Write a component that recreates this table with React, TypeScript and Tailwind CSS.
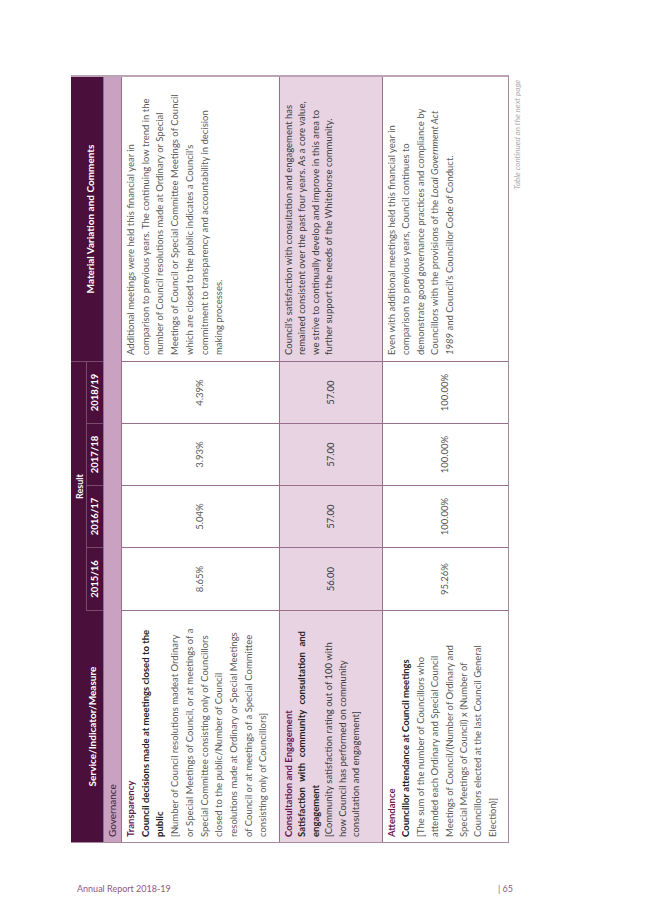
import React from 'react'

type Row = {
  bg: string
  height: string
  leading: string
  tone: string
  heading: string
  title: string[]
  justifyFirst?: boolean
  body: string[]
  values: string[]
  comments: React.ReactNode[]
}

const years = ['2015/16', '2016/17', '2017/18', '2018/19']

const rows: Row[] = [
  {
    bg: 'bg-white',
    height: 'h-[158px]',
    leading: 'leading-[14.7px]',
    tone: 'text-[#5a5a5a]',
    heading: 'Transparency',
    title: ['Council decisions made at meetings closed to the', 'public'],
    body: [
      '[Number of Council resolutions madeat Ordinary',
      'or Special Meetings of Council, or at meetings of a',
      'Special Committee consisting only of Councillors',
      'closed to the public/Number of Council',
      'resolutions made at Ordinary or Special Meetings',
      'of Council or at meetings of a Special Committee',
      'consisting only of Councillors]',
    ],
    values: ['8.65%', '5.04%', '3.93%', '4.39%'],
    comments: [
      'Additional meetings were held this financial year in',
      'comparison to previous years. The continuing low trend in the',
      'number of Council resolutions made at Ordinary or Special',
      'Meetings of Council or Special Committee Meetings of Council',
      'which are closed to the public indicates a Council’s',
      'commitment to transparency and accountability in decision',
      'making processes.',
    ],
  },
  {
    bg: 'bg-[#e7d3e1]',
    height: 'h-[103px]',
    leading: 'leading-[13.4px]',
    tone: 'text-[#3a3a3a]',
    heading: 'Consultation and Engagement',
    title: ['Satisfaction with community consultation and', 'engagement'],
    justifyFirst: true,
    body: [
      '[Community satisfaction rating out of 100 with',
      'how Council has performed on community',
      'consultation and engagement]',
    ],
    values: ['56.00', '57.00', '57.00', '57.00'],
    comments: [
      'Council’s satisfaction with consultation and engagement has',
      'remained consistent over the past four years.  As a core value,',
      'we strive to continually develop and improve in this area to',
      'further support the needs of the Whitehorse community.',
    ],
  },
  {
    bg: 'bg-white',
    height: 'h-[126px]',
    leading: 'leading-[14.4px]',
    tone: 'text-[#5a5a5a]',
    heading: 'Attendance',
    title: ['Councillor attendance at Council meetings'],
    body: [
      '[The sum of the number of Councillors who',
      'attended each Ordinary and Special Council',
      'Meetings of Council/(Number of Ordinary and',
      'Special Meetings of Council) x (Number of',
      'Councillors elected at the last Council General',
      'Election)]',
    ],
    values: ['95.26%', '100.00%', '100.00%', '100.00%'],
    comments: [
      'Even with additional meetings held this financial year in',
      'comparison to previous years, Council continues to',
      'demonstrate good governance practices and compliance by',
      <>
        Councillors with the provisions of the <i>Local Government Act</i>
      </>,
      <>
        <i>1989</i> and Council’s Councillor Code of Conduct.
      </>,
    ],
  },
]

const BodyRow: React.FC<{ row: Row }> = ({ row }) => (
  <div className={`flex ${row.height} ${row.bg} border-t-[1.5px] border-[#9a6f8e]`}>
    <div className={`w-[231px] shrink-0 pl-[5px] pt-[2px] ${row.leading} text-[9.5px] whitespace-nowrap`}>
      <div className="font-bold text-[#6a1650]">{row.heading}</div>
      {row.title.map((t, i) => (
        <div
          key={i}
          className={`font-bold text-[#222] ${i === 0 && row.justifyFirst ? 'pr-[20px] [text-align-last:justify]' : ''}`}
        >
          {t}
        </div>
      ))}
      {row.body.map((t, i) => (
        <div key={i} className={row.tone}>
          {t}
        </div>
      ))}
    </div>
    {row.values.map((v, i) => (
      <div
        key={i}
        className={`${i === 0 ? 'w-[63px]' : 'w-[62px]'} shrink-0 border-l border-[#9a6f8e] flex items-center justify-center text-[9.5px] ${row.tone}`}
      >
        {v}
      </div>
    ))}
    <div className={`flex-1 border-l border-[#9a6f8e] pl-[6px] pt-[2px] ${row.leading} text-[9.5px] whitespace-nowrap ${row.tone}`}>
      {row.comments.map((c, i) => (
        <div key={i}>{c}</div>
      ))}
    </div>
  </div>
)

export default function App() {
  return (
    <div className="w-[653px] h-[923px] bg-white flex flex-col font-['Lato','Open_Sans',sans-serif] overflow-hidden">
      <div className="pt-[75px] pl-[71px]">
        {/* landscape page rotated onto the portrait sheet */}
        <div className="w-[455px] h-[768px] overflow-hidden">
          <div className="w-[768px] h-[455px] shrink-0 origin-top-left -rotate-90 translate-y-[768px]">
            <div className="w-[768px] flex flex-col border-x border-b border-[#a8899f] border-r-[2px] border-r-[#bca3b5]">
              {/* header */}
              <div className="flex h-[32px] bg-[#4a0f3a] text-white font-bold">
                <div className="w-[231px] shrink-0 flex items-end justify-center pb-[3px] text-[10px]">
                  Service/Indicator/Measure
                </div>
                <div className="w-[249px] shrink-0 flex flex-col">
                  <div className="h-[16px] flex items-end justify-center text-[9px] leading-[12px] border-b border-[#7b4b6d]">
                    Result
                  </div>
                  <div className="flex h-[16px]">
                    {years.map((y, i) => (
                      <div
                        key={y}
                        className={`${i === 0 ? 'w-[63px]' : 'w-[62px]'} border-l border-[#7b4b6d] flex items-center justify-center text-[9.5px]`}
                      >
                        {y}
                      </div>
                    ))}
                  </div>
                </div>
                <div className="flex-1 border-l border-[#7b4b6d] flex items-end justify-center pb-[5px] text-[10px]">
                  Material Variation and Comments
                </div>
              </div>
              <div className="h-[1px] bg-[#6d7bb0]" />
              <div className="h-[17px] bg-[#c9a1c1] flex items-center pl-[5px] text-[10px] text-[#3a2233]">
                Governance
              </div>
              {rows.map((r) => (
                <BodyRow key={r.heading} row={r} />
              ))}
            </div>
            <div className="mt-[3px] pr-[5px] text-right italic text-[8px] leading-[10px] text-[#ababab]">
              Table continued on the next page
            </div>
          </div>
        </div>
      </div>
      <div className="mt-[40px] pl-[77px] pr-[140px] flex justify-between text-[9px] leading-[12px] text-[#8d5a80]">
        <span>Annual Report 2018-19</span>
        <span>| 65</span>
      </div>
    </div>
  )
}
